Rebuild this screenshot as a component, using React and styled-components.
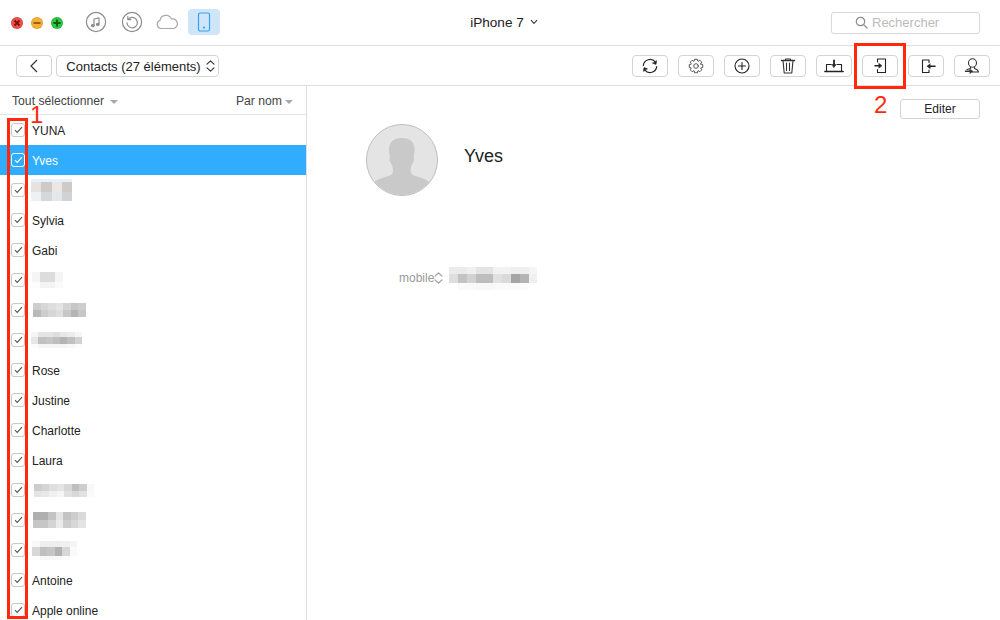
import React from 'react';
import styled, { createGlobalStyle } from 'styled-components';

const GlobalStyle = createGlobalStyle`
  html, body {
    margin: 0;
    padding: 0;
    background: #fff;
  }
  body {
    font-family: "Liberation Sans", Arial, sans-serif;
    color: #222;
  }
`;

const Page = styled.div`
  position: relative;
  width: 1000px;
  height: 620px;
  overflow: hidden;
  background: #fff;
`;

// title bar
const TitleBar = styled.div`
  display: grid;
  grid-template-columns: 1fr auto 1fr;
  align-items: center;
  height: 45px;
  border-bottom: 1px solid #dedede;
`;

const LeftGroup = styled.div`
  display: flex;
  align-items: center;
  padding-left: 11px;
`;

const Lights = styled.div`
  display: flex;
  gap: 8px;
  margin-right: 15px;
`;

const Light = styled.div`
  display: flex;
  align-items: center;
  justify-content: center;
  width: 12px;
  height: 12px;
  border-radius: 50%;
  background: ${p => p.$color};
  box-shadow: inset 0 0 0 1px rgba(0, 0, 0, 0.08);
`;

const NavIcon = styled.div`
  display: flex;
  align-items: center;
  justify-content: center;
  box-sizing: border-box;
  width: ${p => p.$w || 36}px;
  height: 26px;
  margin-top: -1px;
  padding-right: ${p => p.$pr || 0}px;
  border-radius: 4px;
  background: ${p => (p.$active ? '#cfe6fa' : 'transparent')};
`;

const DeviceTitle = styled.div`
  display: flex;
  align-items: center;
  gap: 6px;
  margin-left: 8px;
  margin-top: -1px;
  font-size: 13.6px;
  color: #222;
`;

const RightGroup = styled.div`
  display: flex;
  justify-content: flex-end;
  padding-right: 20px;
`;

const Search = styled.div`
  display: flex;
  align-items: center;
  gap: 4px;
  box-sizing: border-box;
  width: 149px;
  height: 22px;
  padding-left: 23px;
  border: 1px solid #d8d8d8;
  border-radius: 3px;
  font-size: 13px;
  color: #bbb;
`;

// toolbar
const Toolbar = styled.div`
  display: flex;
  align-items: center;
  justify-content: space-between;
  height: 39px;
  padding: 0 10px 0 16px;
  border-bottom: 1px solid #dedede;
`;

const ToolGroup = styled.div`
  display: flex;
  gap: ${p => p.$gap}px;
`;

const ToolButton = styled.div`
  display: flex;
  align-items: center;
  justify-content: center;
  box-sizing: border-box;
  width: 36px;
  height: 22px;
  border: 1px solid #d4d4d4;
  border-radius: 4px;
  background: #fff;
`;

const SelectBox = styled(ToolButton)`
  width: 163px;
  gap: 5px;
  padding: 1px 0 0 6px;
  font-size: 13px;
  color: #222;
`;

// body
const Body = styled.div`
  display: flex;
  height: 534px;
`;

const Sidebar = styled.div`
  width: 306px;
  border-right: 1px solid #dedede;
  overflow: hidden;
`;

const ListHeader = styled.div`
  display: flex;
  align-items: center;
  justify-content: space-between;
  height: 26px;
  padding: 3px 13px 0 12px;
  font-size: 12.2px;
  color: #444;
  border-bottom: 1px solid #e4e4e4;
  margin-top: -1px;
`;

const HeaderLabel = styled.div`
  display: flex;
  align-items: center;
  gap: ${p => p.$gap}px;
`;

const Caret = styled.span`
  width: 0;
  height: 0;
  border-left: 4px solid transparent;
  border-right: 4px solid transparent;
  border-top: 4px solid #a8a8a8;
  margin-top: 1px;
`;

const Row = styled.div`
  display: flex;
  align-items: center;
  height: 30px;
  padding-left: 11px;
  font-size: 12px;
  color: ${p => (p.$selected ? '#fff' : '#222')};
  background: ${p => (p.$selected ? '#30adff' : '#fff')};
`;

const Check = styled.div`
  display: flex;
  align-items: center;
  justify-content: center;
  box-sizing: border-box;
  width: 14px;
  height: 14px;
  margin-right: 7px;
  border: 1px solid ${p => (p.$selected ? '#fff' : '#c8c8c8')};
  border-radius: 3px;
`;

const ContactLabel = styled.span`
  padding-top: 1px;
`;

const Blur = styled.div`
  display: flex;
  flex-direction: column;
  margin-left: ${p => p.$x || 0}px;
`;

const BlurLine = styled.div`
  display: flex;
  height: ${p => p.$h}px;
`;

const BlurCell = styled.div`
  width: ${p => p.$w}px;
  background: ${p => p.$c};
`;

const Detail = styled.div`
  flex: 1;
  min-width: 0;
`;

const DetailActions = styled.div`
  display: flex;
  justify-content: flex-end;
  padding: 13px 20px 0 0;
`;

const EditButton = styled.div`
  display: flex;
  align-items: center;
  justify-content: center;
  box-sizing: border-box;
  width: 80px;
  height: 20px;
  border: 1px solid #d4d4d4;
  border-radius: 3px;
  font-size: 12px;
  color: #222;
`;

const Profile = styled.div`
  display: flex;
  align-items: center;
  margin: 5px 0 0 59px;
`;

const ContactName = styled.div`
  margin: -8px 0 0 26px;
  font-size: 18px;
  color: #222;
`;

const PhoneRow = styled.div`
  display: flex;
  align-items: center;
  margin: 71px 0 0 92px;
  font-size: 12px;
  color: #999;
`;

const PhoneType = styled.div`
  display: flex;
  align-items: center;
  margin-top: -2px;
`;

// annotations drawn over the screenshot
const Mark = styled.div`
  position: absolute;
  left: ${p => p.$x}px;
  top: ${p => p.$y}px;
  width: ${p => p.$w}px;
  height: ${p => p.$h}px;
  box-sizing: border-box;
  border: 3px solid #ff2a0e;
`;

const MarkLabel = styled.div`
  position: absolute;
  left: ${p => p.$x}px;
  top: ${p => p.$y}px;
  font-size: 24px;
  line-height: 24px;
  color: #ff2a0e;
`;

const Stroke = ({ w = 20, h = 20, color = '#444', sw = 1.2, children }) => (
  <svg width={w} height={h} viewBox={`0 0 ${w} ${h}`} fill="none" stroke={color} strokeWidth={sw} strokeLinecap="round" strokeLinejoin="round">
    {children}
  </svg>
);

const gray = n => `rgb(${n},${n},${n})`;

const blurs = {
  a: { x: -1, cw: 10.25, lines: [
    { h: 3, cells: ['#e4f3fa', '#e4f3fa', '#e4f3fa', '#e4f3fa'] },
    { h: 10, cells: ['#e6e2df', '#cfcac8', '#ebe7e4', '#cfcac8'] },
    { h: 9, cells: ['#eef0f1', '#d5d8da', '#e5e7e9', '#d0d3d6'] },
  ] },
  b: { x: 0, cw: 7.75, lines: [
    { h: 10, cells: [245, 220, 220, 244] },
    { h: 6, cells: [252, 243, 243, 250] },
  ] },
  c: { x: 1, cw: 7.5, lines: [
    { h: 7, cells: [205, 215, 222, 228, 212, 198, 205] },
    { h: 7, cells: [185, 205, 215, 222, 200, 180, 198] },
  ] },
  d: { x: -1, cw: 7.3, lines: [
    { h: 5, cells: [245, 228, 228, 222, 232, 236, 245] },
    { h: 7, cells: [230, 192, 198, 190, 180, 192, 210] },
    { h: 4, cells: [252, 245, 245, 245, 245, 248, 252] },
  ] },
  e: { x: 2, cw: 7.5, lines: [
    { h: 7, cells: [205, 212, 222, 228, 215, 190, 205, 248] },
    { h: 6, cells: [228, 232, 240, 245, 225, 215, 225, 250] },
  ] },
  f: { x: 1, cw: 7.5, lines: [
    { h: 8, cells: [175, 175, 195, 228, 195, 205, 218] },
    { h: 8, cells: [198, 198, 212, 235, 205, 215, 228] },
  ] },
  g: { x: 0, cw: 7.5, lines: [
    { h: 6, cells: [248, 238, 238, 238, 240, 245] },
    { h: 9, cells: [215, 192, 198, 178, 215, 250] },
    { h: 4, cells: [252, 248, 248, 248, 252, 255] },
  ] },
  phone: { x: 6, cw: 8.8, lines: [
    { h: 7, cells: [235, 235, 240, 228, 228, 242, 242, 238, 238, 245] },
    { h: 9, cells: [222, 195, 210, 190, 190, 225, 218, 165, 180, 240] },
    { h: 7, cells: [255, 250, 250, 248, 248, 250, 250, 250, 252, 255] },
  ] },
};

const contacts = [
  { name: 'YUNA' },
  { name: 'Yves', selected: true },
  { blur: 'a' },
  { name: 'Sylvia' },
  { name: 'Gabi' },
  { blur: 'b' },
  { blur: 'c' },
  { blur: 'd' },
  { name: 'Rose' },
  { name: 'Justine' },
  { name: 'Charlotte' },
  { name: 'Laura' },
  { blur: 'e' },
  { blur: 'f' },
  { blur: 'g' },
  { name: 'Antoine' },
  { name: 'Apple online' },
];

const Pixels = ({ id }) => {
  const data = blurs[id];
  return (
    <Blur $x={data.x}>
      {data.lines.map((line, i) => (
        <BlurLine key={i} $h={line.h}>
          {line.cells.map((c, j) => (
            <BlurCell key={j} $w={data.cw} $c={typeof c === 'number' ? gray(c) : c} />
          ))}
        </BlurLine>
      ))}
    </Blur>
  );
};

const UpDown = ({ color = '#333' }) => (
  <svg width="9" height="14" viewBox="0 0 9 14" fill="none" stroke={color} strokeWidth="1.1" strokeLinecap="round" strokeLinejoin="round">
    <path d="M1 5.2 4.5 1.8 8 5.2" />
    <path d="M1 8.8 4.5 12.2 8 8.8" />
  </svg>
);

// eight square teeth round a ring
const GearPath = () => {
  const pts = [];
  for (let i = 0; i < 8; i++) {
    const a = (i / 8) * Math.PI * 2;
    [[5.2, -0.36], [6.9, -0.2], [6.9, 0.2], [5.2, 0.36]].forEach(([r, d]) => {
      pts.push(`${(8 + r * Math.cos(a + d)).toFixed(2)},${(8 + r * Math.sin(a + d)).toFixed(2)}`);
    });
  }
  return <polygon points={pts.join(' ')} />;
};

const toolIcons = [
  <Stroke w={16} h={16} key="sync" color="#222" sw={1.2}>
    <path d="M1.3 7.4A6.8 6.8 0 0 1 13.2 3.8" />
    <path d="M14.7 8.6A6.8 6.8 0 0 1 2.8 12.2" />
    <path d="M14.6 3 14 6.4 10.8 5.2Z" fill="#222" strokeWidth="0.6" />
    <path d="M1.4 13 2 9.6 5.2 10.8Z" fill="#222" strokeWidth="0.6" />
  </Stroke>,
  <Stroke w={16} h={16} key="gear" color="#555" sw={1}>
    <GearPath />
    <circle cx="8" cy="8" r="2.3" />
  </Stroke>,
  <Stroke w={16} h={16} key="plus" color="#222" sw={1.1}>
    <circle cx="8" cy="8" r="7" />
    <path d="M8 4.5v7M4.5 8h7" />
  </Stroke>,
  <Stroke w={16} h={16} key="trash" color="#333" sw={1.1}>
    <path d="M1.5 2.5h13" strokeWidth="1.4" />
    <path d="M5.5 2.5V1h5v1.5" />
    <path d="M3 2.5 4.2 15h7.6L13 2.5" />
    <path d="M6.5 5v7.5M9.5 5v7.5" />
  </Stroke>,
  <Stroke w={20} h={16} key="download" color="#222" sw={1.1}>
    <path d="M2.5 12.5V6.5H7M13 6.5h4.5V12.5" />
    <path d="M0.8 13.5h18.4" strokeWidth="1.4" />
    <path d="M10 2.5v4" strokeWidth="1.8" />
    <path d="M7.8 6.5H12.2L10 9.5Z" fill="#222" strokeWidth="0.5" />
  </Stroke>,
  <Stroke w={16} h={16} key="import" color="#222" sw={1.1}>
    <path d="M5.5 4V1h8v13.5h-8v-3" />
    <path d="M3 7.7h4" strokeWidth="1.5" />
    <path d="M7 5.4 10 7.7 7 10Z" fill="#222" strokeWidth="0.5" />
  </Stroke>,
  <Stroke w={20} h={16} key="export" color="#222" sw={1.1}>
    <path d="M13 4.5V2H6.5v12.5H13V12" />
    <path d="M14 8.2h5" strokeWidth="1.5" />
    <path d="M14 5.9 11 8.2 14 10.5Z" fill="#222" strokeWidth="0.5" />
  </Stroke>,
  <Stroke w={18} h={16} key="person" color="#333" sw={1.1}>
    <ellipse cx="9.5" cy="5" rx="4" ry="4.2" />
    <path d="M7.5 9.2v1.3L4 11.6M11.5 9.2v1.3c2 .7 3.500 1.200 4 3.500H9" />
    <path d="M2.5 13.3h4.5" strokeWidth="1.5" />
    <path d="M7 11.2 10 13.3 7 15.400Z" fill="#333" strokeWidth="0.5" />
  </Stroke>,
];

const App = () => (
  <Page>
    <GlobalStyle />
    <TitleBar>
      <LeftGroup>
        <Lights>
          <Light $color="#f0504a">
            <svg width="8" height="8" viewBox="0 0 8 8" stroke="#7a1210" strokeWidth="1.8"><path d="M1.5 1.5 6.5 6.5M6.5 1.5 1.5 6.5" /></svg>
          </Light>
          <Light $color="#f5b03a">
            <svg width="8" height="8" viewBox="0 0 8 8" stroke="#8f5a08" strokeWidth="1.8"><path d="M0.5 4h7" /></svg>
          </Light>
          <Light $color="#2fc63f">
            <svg width="8" height="8" viewBox="0 0 8 8" stroke="#0b5c14" strokeWidth="1.8"><path d="M0.5 4h7M4 0.5v7" /></svg>
          </Light>
        </Lights>
        <NavIcon>
          <Stroke w={22} h={22} color="#8c8c8c">
            <circle cx="11" cy="11" r="9.6" />
            <path d="M9 14.4V8l5-1.2v6.2" />
            <ellipse cx="7.8" cy="14.6" rx="1.3" ry="1" fill="#8c8c8c" />
            <ellipse cx="12.8" cy="13.4" rx="1.3" ry="1" fill="#8c8c8c" />
          </Stroke>
        </NavIcon>
        <NavIcon>
          <Stroke w={22} h={22} color="#8c8c8c">
            <circle cx="11" cy="11" r="9.6" />
            <path d="M7.3 8.2A5.2 5.2 0 1 1 6 11.8" />
            <path d="M6.8 5.6V8.6H9.8" />
          </Stroke>
        </NavIcon>
        <NavIcon $w={38} $pr={5}>
          <Stroke w={24} h={16} color="#a8a8a8">
            <path d="M6 14.5A4.2 4.2 0 0 1 5 6.4 6 6 0 0 1 16.4 5 4.8 4.8 0 0 1 18.6 14.5Z" />
          </Stroke>
        </NavIcon>
        <NavIcon $active $w={32}>
          <Stroke w={14} h={20} color="#35a2ee">
            <rect x="1.5" y="1" width="11" height="18" rx="1.8" />
            <circle cx="7" cy="15.6" r="0.5" fill="#35a2ee" />
          </Stroke>
        </NavIcon>
      </LeftGroup>
      <DeviceTitle>
        iPhone 7
        <svg width="8" height="6" viewBox="0 0 8 6" fill="none" stroke="#444" strokeWidth="1.2"><path d="M1 1.2 4 4.4 7 1.2" /></svg>
      </DeviceTitle>
      <RightGroup>
        <Search>
          <Stroke w={13} h={13} color="#8c8c8c">
            <circle cx="5.5" cy="5.5" r="4.2" />
            <path d="M8.6 8.6 12 12" />
          </Stroke>
          Rechercher
        </Search>
      </RightGroup>
    </TitleBar>

    <Toolbar>
      <ToolGroup $gap={4}>
        <ToolButton>
          <svg width="10" height="14" viewBox="0 0 10 14" fill="none" stroke="#333" strokeWidth="1.2"><path d="M8 1 2 7l6 6" /></svg>
        </ToolButton>
        <SelectBox>
          Contacts (27 éléments)
          <UpDown />
        </SelectBox>
      </ToolGroup>
      <ToolGroup $gap={10}>
        {toolIcons.map((icon, i) => <ToolButton key={i}>{icon}</ToolButton>)}
      </ToolGroup>
    </Toolbar>

    <Body>
      <Sidebar>
        <ListHeader>
          <HeaderLabel $gap={6}>Tout sélectionner <Caret /></HeaderLabel>
          <HeaderLabel $gap={3}>Par nom <Caret /></HeaderLabel>
        </ListHeader>
        {contacts.map((c, i) => (
          <Row key={i} $selected={c.selected}>
            <Check $selected={c.selected}>
              <svg width="9" height="8" viewBox="0 0 9 8" fill="none" stroke={c.selected ? '#fff' : '#555'} strokeWidth="1.1"><path d="M1 4.2 3.2 6.4 8 1.2" /></svg>
            </Check>
            {c.blur ? <Pixels id={c.blur} /> : <ContactLabel>{c.name}</ContactLabel>}
          </Row>
        ))}
      </Sidebar>
      <Detail>
        <DetailActions>
          <EditButton>Editer</EditButton>
        </DetailActions>
        <Profile>
          <svg width="72" height="72" viewBox="0 0 72 72">
            <defs>
              <clipPath id="avatarClip"><circle cx="36" cy="36" r="35" /></clipPath>
            </defs>
            <circle cx="36" cy="36" r="35.5" fill="#e4e4e4" stroke="#bdbdbd" />
            <path clipPath="url(#avatarClip)" fill="#c9c9c9" d="M36 14c8.5 0 12.5 4.500 12.5 11 0 3.500-.3 6-1 8 .6 1 .8 2 .4 3.500-.5 1.800-1.400 3-2.400 5-.6 1.300-.9 3.400-.9 5.200 0 2.500 1.500 4 4 5 5 1.800 9.600 2.600 13 5 2 1.600 3.500 3.600 4.500 6V74H5V62.700c1.200-2.800 3-4.800 5-6 3.600-2.400 8.400-3.200 13-5 2.600-1 4-2.500 4-5 0-1.800-.3-3.900-.9-5.200-1-2-1.900-3.200-2.400-5-.4-1.500-.2-2.500.4-3.500-.7-2-1.100-4.500-1.100-8 0-6.500 4.500-11 13-11Z" />
          </svg>
          <ContactName>Yves</ContactName>
        </Profile>
        <PhoneRow>
          <PhoneType>
            mobile
            <UpDown color="#999" />
          </PhoneType>
          <Pixels id="phone" />
        </PhoneRow>
      </Detail>
    </Body>

    <Mark $x={7} $y={118} $w={21} $h={501} />
    <MarkLabel $x={30} $y={103}>1</MarkLabel>
    <Mark $x={854} $y={43} $w={52} $h={46} />
    <MarkLabel $x={874} $y={93}>2</MarkLabel>
  </Page>
);

export default App;
